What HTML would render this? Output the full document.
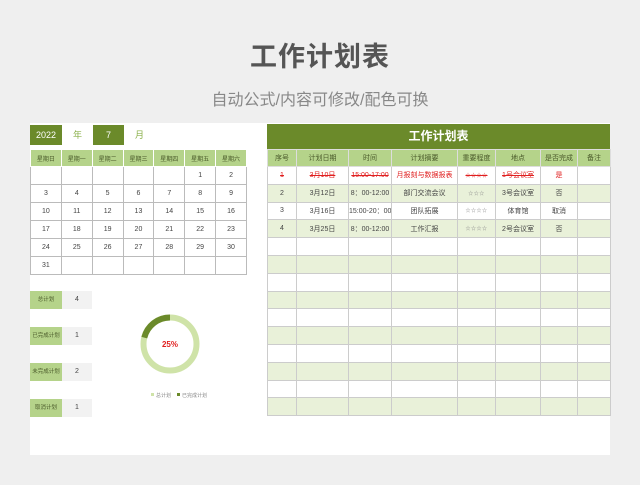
<!DOCTYPE html>
<html><head><meta charset="utf-8"><style>
body{margin:0;width:640px;height:485px;background:#efefef;font-family:"Liberation Sans","Noto Sans CJK SC",sans-serif;position:relative;overflow:hidden}
.abs{position:absolute}
h1{position:absolute;top:35px;left:0;width:640px;text-align:center;margin:0;font-size:27px;color:#555;font-weight:bold;letter-spacing:1px}
.sub{top:86px;left:0;width:640px;text-align:center;font-size:16px;color:#888}
.panel{left:30px;top:123px;width:580px;height:332px;background:#fff}
table{border-collapse:collapse;table-layout:fixed;position:absolute}
td{padding:0;text-align:center;font-size:7px;color:#444;border:1px solid #bbb;height:17px;overflow:hidden;white-space:nowrap}
.cal th,.plan th{background:#b5d38a;color:#4a5a2a;font-size:6px;font-weight:normal;border:1px solid #fff;height:16px;padding:0}
.plan th{font-size:7px;border:1px solid #ddd}
.plan tr:nth-child(odd) td{background:#e9f1d9}
.plan td{border:1px solid #ccc;height:16.8px}
.red td{color:#e02020;text-decoration:line-through}
.st{font-size:5px;color:#888;letter-spacing:0.5px}
.lab{width:32px;height:18px;background:#b5d38a;color:#4a5a2a;font-size:5.5px;text-align:center;line-height:18px}
.val{width:30px;height:18px;background:#f2f2f2;color:#444;font-size:7px;text-align:center;line-height:18px}
</style></head><body>
<h1>工作计划表</h1>
<div class="abs sub">自动公式/内容可修改/配色可换</div>
<div class="abs panel"></div>
<div class="abs" style="left:30px;top:125px;width:32px;height:20px;background:#6b8a2a;color:#fff;font-size:9px;line-height:20px;text-align:center">2022</div>
<div class="abs" style="left:62px;top:125px;width:31px;height:20px;color:#8ab04a;font-size:9px;line-height:20px;text-align:center">年</div>
<div class="abs" style="left:93px;top:125px;width:31px;height:20px;background:#6b8a2a;color:#fff;font-size:9px;line-height:20px;text-align:center">7</div>
<div class="abs" style="left:124px;top:125px;width:31px;height:20px;color:#8ab04a;font-size:9px;line-height:20px;text-align:center">月</div>
<table class="cal" style="left:30px;top:149px;width:217px">
<tr><th>星期日</th><th>星期一</th><th>星期二</th><th>星期三</th><th>星期四</th><th>星期五</th><th>星期六</th></tr>
<tr><td></td><td></td><td></td><td></td><td></td><td>1</td><td>2</td></tr>
<tr><td>3</td><td>4</td><td>5</td><td>6</td><td>7</td><td>8</td><td>9</td></tr>
<tr><td>10</td><td>11</td><td>12</td><td>13</td><td>14</td><td>15</td><td>16</td></tr>
<tr><td>17</td><td>18</td><td>19</td><td>20</td><td>21</td><td>22</td><td>23</td></tr>
<tr><td>24</td><td>25</td><td>26</td><td>27</td><td>28</td><td>29</td><td>30</td></tr>
<tr><td>31</td><td></td><td></td><td></td><td></td><td></td><td></td></tr>
</table>
<div class="abs lab" style="left:30px;top:291px">总计划</div><div class="abs val" style="left:62px;top:291px">4</div>
<div class="abs lab" style="left:30px;top:327px">已完成计划</div><div class="abs val" style="left:62px;top:327px">1</div>
<div class="abs lab" style="left:30px;top:363px">未完成计划</div><div class="abs val" style="left:62px;top:363px">2</div>
<div class="abs lab" style="left:30px;top:399px">取消计划</div><div class="abs val" style="left:62px;top:399px">1</div>
<svg class="abs" style="left:130px;top:305px" width="80" height="100">
<circle cx="40" cy="39" r="26.5" fill="none" stroke="#cfe3a8" stroke-width="6"/>
<path d="M40 12.5 A26.5 26.5 0 0 0 14.3 32.6" fill="none" stroke="#6b8a2a" stroke-width="6"/>
<text x="40" y="42" text-anchor="middle" font-size="8" font-weight="bold" fill="#e02020" font-family="Liberation Sans">25%</text>
<rect x="21" y="88" width="3" height="3" fill="#cfe3a8"/><text x="26" y="92" font-size="5" fill="#888">总计划</text>
<rect x="47" y="88" width="3" height="3" fill="#6b8a2a"/><text x="52" y="92" font-size="5" fill="#888">已完成计划</text>
</svg>
<div class="abs" style="left:267px;top:124px;width:343px;height:25px;background:#6b8a2a;color:#fff;font-size:12px;font-weight:bold;line-height:25px;text-align:center">工作计划表</div>
<table class="plan" style="left:267px;top:149px;width:343px">
<colgroup><col style="width:29px"><col style="width:52px"><col style="width:43px"><col style="width:66px"><col style="width:38px"><col style="width:45px"><col style="width:37px"><col style="width:33px"></colgroup>
<tr><th>序号</th><th>计划日期</th><th>时间</th><th>计划摘要</th><th>重要程度</th><th>地点</th><th>是否完成</th><th>备注</th></tr>
<tr class="red"><td>1</td><td>3月10日</td><td>15:00-17:00</td><td style="text-decoration:none">月报刻与数据报表</td><td class="st" style="color:#e02020">☆☆☆☆</td><td>1号会议室</td><td style="text-decoration:none">是</td><td></td></tr>
<tr><td>2</td><td>3月12日</td><td>8：00-12:00</td><td>部门交流会议</td><td class="st">☆☆☆</td><td>3号会议室</td><td>否</td><td></td></tr>
<tr><td>3</td><td>3月16日</td><td>15:00-20：00</td><td>团队拓展</td><td class="st">☆☆☆☆</td><td>体育馆</td><td>取消</td><td></td></tr>
<tr><td>4</td><td>3月25日</td><td>8：00-12:00</td><td>工作汇报</td><td class="st">☆☆☆☆</td><td>2号会议室</td><td>否</td><td></td></tr>
<tr><td></td><td></td><td></td><td></td><td></td><td></td><td></td><td></td></tr>
<tr><td></td><td></td><td></td><td></td><td></td><td></td><td></td><td></td></tr>
<tr><td></td><td></td><td></td><td></td><td></td><td></td><td></td><td></td></tr>
<tr><td></td><td></td><td></td><td></td><td></td><td></td><td></td><td></td></tr>
<tr><td></td><td></td><td></td><td></td><td></td><td></td><td></td><td></td></tr>
<tr><td></td><td></td><td></td><td></td><td></td><td></td><td></td><td></td></tr>
<tr><td></td><td></td><td></td><td></td><td></td><td></td><td></td><td></td></tr>
<tr><td></td><td></td><td></td><td></td><td></td><td></td><td></td><td></td></tr>
<tr><td></td><td></td><td></td><td></td><td></td><td></td><td></td><td></td></tr>
<tr><td></td><td></td><td></td><td></td><td></td><td></td><td></td><td></td></tr>
</table>
</body></html>
